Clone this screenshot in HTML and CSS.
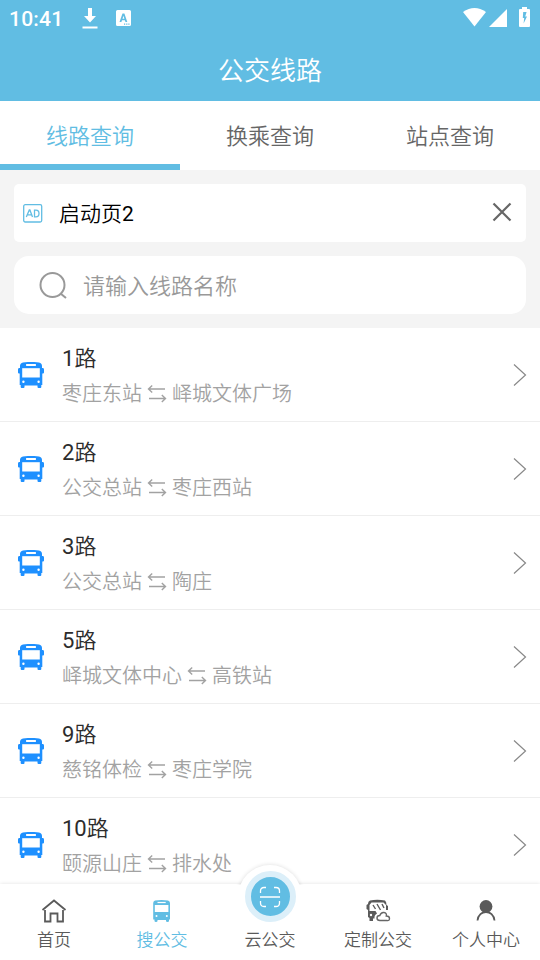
FILE: index.html
```html
<!DOCTYPE html>
<html lang="zh-CN">
<head>
<meta charset="utf-8">
<title>公交线路</title>
<link rel="stylesheet" href="styles.css">
</head>
<body>
<svg class="defs" aria-hidden="true">
  <symbol id="bus" viewBox="0 0 26 26">
    <path d="M5 .5Q13-.7 21 .5Q24 1 24 4V6H25Q26 6 26 7.500V10.500Q26 11.500 25 11.500H24.300V23H23.300V25Q23.300 26 22.300 26H20.500Q19.500 26 19.500 25V23.500H6.500V25Q6.500 26 5.500 26H3.700Q2.700 26 2.700 25V23H1.700V11.500H1Q0 11.500 0 10.500V7.500Q0 6 1 6H2V4Q2 1 5 .5Z"/>
    <g fill="#fff"><rect x="8" y="2" width="10" height="1.900" rx=".6"/><rect x="4.200" y="6.200" width="17.600" height="9.300"/><circle cx="5.400" cy="19.800" r="1.200"/><circle cx="20.600" cy="19.800" r="1.200"/></g>
  </symbol>
  <symbol id="swap" viewBox="0 0 20 20">
    <path d="M5.200 1.500L1.500 5L5.200 8.500M1.500 5H18M14.800 11L18.500 14.500L14.800 18M2 14.500H18.500"/>
  </symbol>
  <symbol id="next" viewBox="0 0 14 24"><path d="M1 1.500L12.500 12L1 22.500"/></symbol>
</svg>
<div class="app">
  <header class="top">
    <div class="status">
      <span class="clock">10:41</span>
      <svg class="download" viewBox="0 0 16 21"><path d="M6 0H10V8H14L8 14.500L2 8H6ZM.5 18.500H15.500V20.500H.5Z"/></svg>
      <svg class="keyboard" viewBox="0 0 15 16"><path fill-rule="evenodd" d="M1.500 0H13.500Q15 0 15 1.500V14.500Q15 16 13.500 16H1.500Q0 16 0 14.500V1.500Q0 0 1.500 0ZM6.500 3.500L3.500 12H5.400L6 10.200H8.900L9.500 12H11.300L8.400 3.500ZM7.450 5.700L8.400 8.700H6.500ZM8 13.500V14.800H9.200V13.500ZM10.200 13.500V14.800H11.400V13.500ZM12.300 13.500V14.800H13.500V13.500Z"/></svg>
      <svg class="wifi" viewBox="0 0 23 19"><path d="M0 4Q11.500-4 23 4L11.500 18.500Z"/></svg>
      <svg class="signal" viewBox="0 0 18 18"><path d="M18 0V18H0Z"/></svg>
      <svg class="battery" viewBox="0 0 11 20"><path fill-rule="evenodd" d="M3 0H8V2H10Q11 2 11 3V19Q11 20 10 20H1Q0 20 0 19V3Q0 2 1 2H3ZM4.200 5L3.800 11H5.200L4.600 16.500L8 9.500H6.200L7.600 5Z"/></svg>
    </div>
    <h1 class="title">公交线路</h1>
  </header>
  <nav class="tabs">
    <a class="tab active">线路查询</a>
    <a class="tab">换乘查询</a>
    <a class="tab">站点查询</a>
  </nav>
  <section class="tools">
    <div class="notice">
      <svg class="ad" viewBox="0 0 20 19"><rect x=".7" y=".7" width="18" height="17.300" rx="1.500"/><path d="M3.300 13L6.300 6H6.900L9.500 13M4.300 10.800H8.700M11.500 6.200V12.800H13Q16 12.800 16 9.500T13 6.200Z"/></svg>
      <span class="notice-text">启动页<b>2</b></span>
      <svg class="close" viewBox="0 0 20 20"><path d="M1.500 1.500L18.500 18.500M18.500 1.500L1.500 18.500"/></svg>
    </div>
    <div class="search">
      <svg class="lens" viewBox="0 0 29 28"><circle cx="13.500" cy="13" r="12"/><path d="M21.500 21.500L27 26"/></svg>
      <span>请输入线路名称</span>
    </div>
  </section>
  <main class="list">
    <div class="row"><svg class="bus"><use href="#bus"/></svg><div class="info"><div class="name"><b>1</b>路</div><div class="ends">枣庄东站<svg class="swap"><use href="#swap"/></svg>峄城文体广场</div></div><svg class="next"><use href="#next"/></svg></div>
    <div class="row"><svg class="bus"><use href="#bus"/></svg><div class="info"><div class="name"><b>2</b>路</div><div class="ends">公交总站<svg class="swap"><use href="#swap"/></svg>枣庄西站</div></div><svg class="next"><use href="#next"/></svg></div>
    <div class="row"><svg class="bus"><use href="#bus"/></svg><div class="info"><div class="name"><b>3</b>路</div><div class="ends">公交总站<svg class="swap"><use href="#swap"/></svg>陶庄</div></div><svg class="next"><use href="#next"/></svg></div>
    <div class="row"><svg class="bus"><use href="#bus"/></svg><div class="info"><div class="name"><b>5</b>路</div><div class="ends">峄城文体中心<svg class="swap"><use href="#swap"/></svg>高铁站</div></div><svg class="next"><use href="#next"/></svg></div>
    <div class="row"><svg class="bus"><use href="#bus"/></svg><div class="info"><div class="name"><b>9</b>路</div><div class="ends">慈铭体检<svg class="swap"><use href="#swap"/></svg>枣庄学院</div></div><svg class="next"><use href="#next"/></svg></div>
    <div class="row"><svg class="bus"><use href="#bus"/></svg><div class="info"><div class="name"><b>10</b>路</div><div class="ends">颐源山庄<svg class="swap"><use href="#swap"/></svg>排水处</div></div><svg class="next"><use href="#next"/></svg></div>
  </main>
  <footer class="dock">
    <a class="item"><svg class="icon line" viewBox="0 0 26 26"><path d="M1.500 12L13 2.500L24.500 12M4 12V23.500H9.500V15.500H16.500V23.500H22V12"/></svg><span>首页</span></a>
    <a class="item current"><svg class="icon" viewBox="0 0 26 26"><path d="M6 2.500Q12.500 1.300 19 2.500Q21 3 21 5V21.500H20V23Q20 24 18.500 24T17 23V22H8.500V23Q8.500 24 7 24T5.500 23V21.500H4.200V5Q4.200 3 6 2.500Z"/><g fill="#fff"><rect x="8.500" y="3.900" width="8.200" height="1.200"/><rect x="5.800" y="7" width="13.600" height="7"/><circle cx="7.500" cy="18" r="1"/><circle cx="17.800" cy="18" r="1"/></g></svg><span>搜公交</span></a>
    <a class="item"><span class="hump"></span><span class="scan"><svg viewBox="0 0 22 22"><path d="M1.500 7V5Q1.500 1.500 5 1.500H7M15 1.500H17Q20.500 1.500 20.500 5V7M20.500 15V17Q20.500 20.500 17 20.500H15M7 20.500H5Q1.500 20.500 1.500 17V15M1 11H21"/></svg></span><span>云公交</span></a>
    <a class="item"><svg class="icon" viewBox="0 0 26 26"><path d="M5 2.500Q12 .8 20 2.500Q21.500 3.500 21.500 7L23 8V12H21V7L18.500 4.500H6.500L4.500 7V13H10.500L12 15.500Q9 17 9.500 20.500H8V23H4.500V20L3 19V12L1.500 11V7L3 6Q3 3 5 2.500Z"/><path class="thin" d="M8 7L10.500 11M12 6L15.500 12M17 6L19 10"/><path class="cloud" d="M15 22.500Q12 22.500 12 20T14.800 17.500Q16 14 19 14.500T21.300 18Q24.500 18 24.500 20.500T22 22.500Z"/><circle class="hole" cx="6" cy="17" r="1.200"/></svg><span>定制公交</span></a>
    <a class="item"><svg class="icon" viewBox="0 0 26 26"><circle cx="13" cy="8.500" r="6.400"/><path class="arc" d="M4.500 22.500C5 17 9 14 13 14S21 17 21.500 22.500"/></svg><span>个人中心</span></a>
  </footer>
</div>
</body>
</html>
```
FILE: styles.css
```css
* { box-sizing: border-box; }
body { margin: 0; font-family: Roboto, "Noto Sans CJK SC", sans-serif; font-weight: 350; }
b { font-weight: 400; }
svg { display: block; flex: none; }
.defs { display: none; }
.app { width: 540px; height: 960px; display: flex; flex-direction: column; overflow: hidden; background: #fff; }
.top { height: 101px; flex: none; background: #61bde3; color: #fff; }
.status { height: 36px; display: flex; align-items: center; padding: 0 10px 0 9px; fill: #fff; }
.clock { width: 73px; font-size: 21px; font-weight: 500; letter-spacing: .2px; padding-top: 1px; }
.download { width: 16px; height: 21px; margin-top: 1px; }
.keyboard { width: 15px; height: 16px; margin-left: 18px; }
.wifi { width: 23px; height: 19px; margin-left: auto; margin-top: -2px; }
.signal { width: 18px; height: 18px; margin-left: 3px; }
.battery { width: 11px; height: 20px; margin-left: 12px; margin-top: -2px; }
.title { margin: 0; padding-top: 3px; font-size: 26px; line-height: 65px; font-weight: 350; text-align: center; }
.tabs { height: 69px; flex: none; display: grid; grid-template-columns: repeat(3, 1fr); }
.tab { font-size: 22px; line-height: 72px; height: 69px; text-align: center; color: #666; }
.active { color: #61bde3; border-bottom: 6px solid #61bde3; }
.tools { height: 158px; flex: none; padding: 14px; display: flex; flex-direction: column; gap: 14px; background: #f4f4f4; }
.notice, .search { height: 58px; display: flex; align-items: center; background: #fff; }
.notice { border-radius: 5px; padding: 0 14px 0 9px; font-size: 21px; color: #000; }
.ad { width: 20px; height: 19px; fill: none; stroke: #61bde3; stroke-width: 1.3; }
.notice-text { margin-left: 16px; padding-bottom: 2px; flex: 1; }
.close { width: 20px; height: 20px; margin-top: -2px; fill: none; stroke: #666; stroke-width: 2.2; }
.search { border-radius: 15px; padding-left: 25px; gap: 15px; font-size: 22px; color: #999; }
.search span { padding-bottom: 2px; }
.lens { width: 29px; height: 28px; margin-top: 2px; fill: none; stroke: #999; stroke-width: 2; }
.list { flex: 1; min-height: 0; overflow: hidden; }
.row { height: 94px; display: flex; align-items: center; padding: 0 13px 0 18px; border-bottom: 1px solid #eee; }
.bus { width: 26px; height: 26px; fill: #1e90ff; }
.info { flex: 1; margin-left: 18px; padding-top: 4px; }
.name { font-size: 22px; line-height: 36px; color: #2c2c2c; }
.ends { display: flex; align-items: center; font-size: 20px; line-height: 35px; color: #a2a2a2; }
.swap { width: 20px; height: 20px; margin: -2px 5px 0; fill: none; stroke: #a2a2a2; stroke-width: 1.4; }
.next { width: 14px; height: 24px; fill: none; stroke: #888; stroke-width: 1.2; }
.dock { height: 76px; flex: none; display: grid; grid-template: 76px / repeat(5, 1fr); position: relative; background: #fff; box-shadow: 0 0 4px rgba(0,0,0,.12); color: #5a5a5a; }
.item { display: flex; flex-direction: column; align-items: center; justify-content: flex-end; padding-bottom: 7px; font-size: 17px; line-height: 26px; position: relative; }
.item > span { position: relative; }
.current { color: #61bde3; }
.icon { width: 26px; height: 26px; margin-bottom: 3px; fill: currentColor; }
.line, .arc, .thin { fill: none; stroke: currentColor; stroke-width: 1.8; }
.thin { stroke-width: 1.4; }
.cloud { fill: #fff; stroke: #666; stroke-width: 1.4; }
.hole { fill: #fff; }
.item > .hump { position: absolute; left: 50%; top: -19px; width: 64px; height: 64px; margin-left: -32px; border-radius: 50%; background: #fff; box-shadow: 0 0 4px rgba(0,0,0,.14); clip-path: inset(-6px -6px 44px -6px); }
.scan { width: 51px; height: 51px; margin-bottom: 5px; flex: none; border: 6px solid #dceff9; border-radius: 50%; background: #61bde3; display: flex; align-items: center; justify-content: center; }
.scan svg { width: 22px; height: 22px; fill: none; stroke: #fff; stroke-width: 1.3; }
```
